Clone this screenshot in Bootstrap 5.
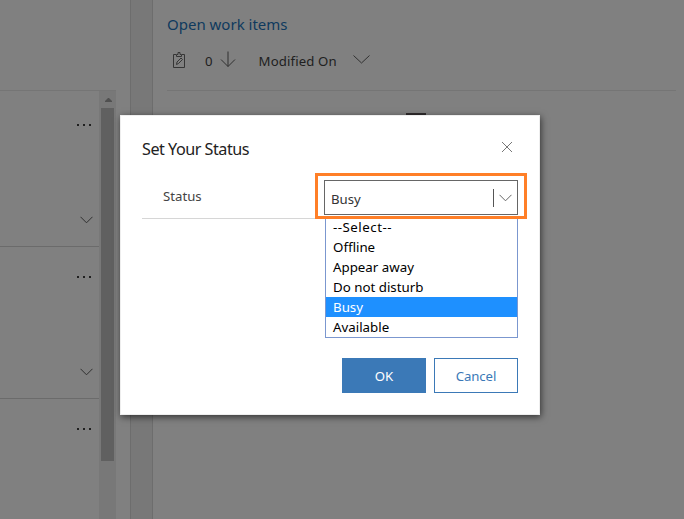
<!DOCTYPE html>
<html lang="en">
<head>
<meta charset="utf-8">
<meta name="viewport" content="width=device-width, initial-scale=1">
<title>Set Your Status</title>
<link href="https://cdn.jsdelivr.net/npm/bootstrap@5.3.0/dist/css/bootstrap.min.css" rel="stylesheet">
<style>
body{width:684px;height:519px;background:#808080;color:#202020;font-family:"Segoe UI","Noto Sans",sans-serif;font-size:13.2px;line-height:20px}
svg{display:block;fill:none}
.side-panel{width:130px}
.side-head{height:91px;width:116px;border-bottom:1px solid #757575}
.side-row{height:152px;border-bottom:1px solid #6b6b6b;padding:29px 6px 0 0}
.side-row:first-child{height:156px;padding-top:33px}
.side-row:last-child{border:0}
.dots{gap:4px;padding-right:2px}
.dots i{width:2px;height:2px;background:#202020}
.row-chevron{margin-top:90px;stroke:#303030}
.track{width:17px;background:#787878;padding:7px 2px 0}
.track-end{width:14px}
.thumb{width:13px;height:353px;background:#606060;margin-top:5px}
.gutter{width:23px;background:#787878;border:solid #6d6d6d;border-width:0 1px}
.work-panel{padding:14px 8px 0 14px}
.work-title{color:#0f3a5e;font-size:15px;line-height:21px;margin:0;font-weight:400}
.toolbar{height:56px;border-bottom:1px solid #757575}
.count-label{margin-left:19px}
.arrow-down{margin-left:7px}
.sort-label{margin-left:23px;letter-spacing:.12px}
.sort-chevron{margin:4px 0 0 16px}
.page-stub{width:20px;height:3px;background:#302c2d;margin:22px 0 0 239px}
.status-dialog{left:120px;top:115px;width:420px;height:300px;background:#fff;border:1px solid #eee;box-shadow:1px 2px 7px rgba(0,0,0,.6);padding:22px 21px 21px}
.dialog-title{font-size:16.2px;line-height:22px;color:#222;letter-spacing:-.5px}
.close-btn{margin:3px 5px 0 0}
.field{height:59px;width:376px;border-bottom:1px solid #d6d6d6;padding:26px 0 0 21px;color:#444}
.callout{left:315px;top:173px;width:212px;height:46px;border:3px solid #ff7f27;padding:4px 6px;background:#fff}
.picker{width:194px;height:35px;border:1px solid #666;padding:0 5px 0 6px;color:#333}
.picked-text{padding-top:2px}
.bar{width:1px;height:18px;background:#555;margin-right:5px}
.options{left:325px;top:217px;width:193px;height:121px;background:#fff;border:1px solid #7b97cf;border-top:0;color:#000}
.options li{height:20px;line-height:21px;padding-left:7px;font-size:13.3px;white-space:nowrap}
.options li:first-child{letter-spacing:.5px}
.options .picked{background:#1e90ff;color:#fff}
.action{width:84px;height:35px;border:1px solid #3b79b7;border-radius:0;font-size:13.2px;padding:2px 0 0;color:#3b79b7;letter-spacing:-.1px}
.action.primary{background:#3b79b7;color:#fff;letter-spacing:.1px}
</style>
</head>
<body class="overflow-hidden position-relative">
<main class="d-flex h-100">
  <aside class="side-panel d-flex flex-column flex-shrink-0">
    <div class="side-head flex-shrink-0"></div>
    <div class="d-flex flex-grow-1 overflow-hidden">
      <div class="flex-grow-1">
        <div class="side-row d-flex flex-column align-items-end overflow-hidden">
          <div class="dots d-flex flex-shrink-0"><i></i><i></i><i></i></div>
          <svg class="row-chevron flex-shrink-0" width="13" height="8"><path d="M.5.8 6.5 6.8 12.5.8"/></svg>
        </div>
        <div class="side-row d-flex flex-column align-items-end overflow-hidden">
          <div class="dots d-flex flex-shrink-0"><i></i><i></i><i></i></div>
          <svg class="row-chevron flex-shrink-0" width="13" height="8"><path d="M.5.8 6.5 6.8 12.5.8"/></svg>
        </div>
        <div class="side-row d-flex flex-column align-items-end overflow-hidden">
          <div class="dots d-flex flex-shrink-0"><i></i><i></i><i></i></div>
        </div>
      </div>
      <div class="track flex-shrink-0 me-auto">
        <svg class="ms-1" width="7" height="5"><path fill="#505050" d="M3 0h1l3 3v1H0V3z"/></svg>
        <div class="thumb"></div>
      </div>
      <div class="track-end flex-shrink-0"></div>
    </div>
  </aside>
  <div class="gutter flex-shrink-0"></div>
  <section class="work-panel flex-grow-1">
    <h2 class="work-title">Open work items</h2>
    <div class="toolbar d-flex align-items-start pt-3">
      <svg class="ms-1" width="15" height="17" stroke="#353535"><path d="M5 3.500H2.500v13h11v-13H11M5.500 5.500v-2h1.500v-2h2v2h1.500v2zM5.500 13.500l.5-2.500 4-4 1.500 1.500-4 4z"/></svg>
      <span class="count-label">0</span>
      <svg class="arrow-down" width="16" height="17" stroke="#303030"><path d="M8 .5v15M1 8.500l7 7 7-7"/></svg>
      <span class="sort-label">Modified On</span>
      <svg class="sort-chevron" width="17" height="9" stroke="#303030"><path d="m.5.5 8 7.500 8-7.500"/></svg>
    </div>
    <div class="page-stub"></div>
  </section>
</main>
<div class="status-dialog position-absolute d-flex flex-column" role="dialog" aria-label="Set Your Status">
  <div class="d-flex justify-content-between">
    <div class="dialog-title">Set Your Status</div>
    <svg class="close-btn" width="12" height="12" stroke="#777"><path d="m1 1 10 10M11 1 1 11"/></svg>
  </div>
  <div class="field"><label>Status</label></div>
  <div class="d-flex justify-content-end gap-2 mt-auto">
    <button class="btn action primary">OK</button>
    <button class="btn action">Cancel</button>
  </div>
</div>
<ul class="options position-absolute list-unstyled m-0">
  <li>--Select--</li><li>Offline</li><li>Appear away</li><li>Do not disturb</li><li class="picked">Busy</li><li>Available</li>
</ul>
<div class="callout position-absolute">
  <div class="picker d-flex align-items-center">
    <span class="picked-text me-auto">Busy</span>
    <span class="bar"></span>
    <svg width="13" height="8" stroke="#666"><path d="m.5.8 6 6 6-6"/></svg>
  </div>
</div>
<script src="https://cdn.jsdelivr.net/npm/bootstrap@5.3.0/dist/js/bootstrap.bundle.min.js"></script>
</body>
</html>
